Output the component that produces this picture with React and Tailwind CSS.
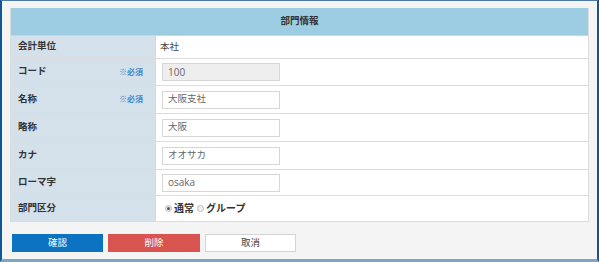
import React from 'react';

const rows = [
  { label: '会計単位', h: 'h-[23px]', kind: 'text', value: '本社' },
  { label: 'コード', h: 'h-[27px]', kind: 'input', value: '100', required: true, disabled: true },
  { label: '名称', h: 'h-[28px]', kind: 'input', value: '大阪支社', required: true },
  { label: '略称', h: 'h-[28px]', kind: 'input', value: '大阪' },
  { label: 'カナ', h: 'h-[28px]', kind: 'input', value: 'オオサカ' },
  { label: 'ローマ字', h: 'h-[26px]', kind: 'input', value: 'osaka' },
  { label: '部門区分', h: 'h-[26px]', kind: 'radio' },
];

const Radio = ({ checked, label }) => (
  <label className="flex items-center gap-[2px]">
    <span className="w-[7px] h-[7px] rounded-full border border-[#bdbdbd] bg-[#eeeeee] flex items-center justify-center">
      {checked && <span className="w-[3px] h-[3px] rounded-full bg-[#555]" />}
    </span>
    <span className="font-bold text-[10px] text-[#333]">{label}</span>
  </label>
);

export default function App() {
  return (
    <div
      className="w-[599px] h-[262px] bg-[#f4f4f4] border-l-2 border-r-2 border-l-[#0e5696] border-r-[#0e5696] border-t border-t-[#4b7aa6] border-b-[3px] border-b-[#7ea5c1] pt-[7px] px-[8px]"
      style={{ fontFamily: '"Open Sans", "Noto Sans CJK JP", sans-serif' }}
    >
      {/* テーブル */}
      <div className="border-x border-[#dcdcdc]">
        <div className="h-[28px] bg-[#9ccde2] border-b border-[#c4d6e0] flex items-center justify-center">
          <span className="font-bold text-[9.5px] text-[#333]">部門情報</span>
        </div>
        {rows.map((r) => (
          <div key={r.label} className={`${r.h} flex border-b border-[#dcdcdc]`}>
            <div className="w-[145px] shrink-0 bg-[#d4e0ea] border-r border-[#d9d9d9] flex items-center justify-between pl-[7px] pr-[12px] pb-[1px]">
              <span className="font-bold text-[9.5px] text-[#333]">{r.label}</span>
              {r.required && <span className="font-bold text-[8px] text-[#3b8ccc]">※必須</span>}
            </div>
            <div className="flex-1 bg-white flex items-center pl-[4px]">
              {r.kind === 'text' && <span className="text-[9.5px] text-[#444]">{r.value}</span>}
              {r.kind === 'input' && (
                <div
                  className={`w-[118px] h-[18px] border border-[#d6d6d6] flex items-center pl-[5px] text-[10px] text-[#666] ml-[2px] ${
                    r.disabled ? 'bg-[#eeeeee]' : 'bg-white'
                  }`}
                >
                  <span className={/^[a-z0-9]+$/.test(r.value) ? '' : 'text-[9.5px]'}>{r.value}</span>
                </div>
              )}
              {r.kind === 'radio' && (
                <div className="flex items-center gap-[3px] pl-[5px]">
                  <Radio checked label="通常" />
                  <Radio label="グループ" />
                </div>
              )}
            </div>
          </div>
        ))}
      </div>

      {/* ボタン */}
      <div className="flex gap-[5px] mt-[12px] pl-[2px]">
        <button className="w-[91px] h-[18px] bg-[#0b73c2] text-white text-[9.5px]">確認</button>
        <button className="w-[92px] h-[18px] bg-[#d9534f] text-white text-[9.5px]">削除</button>
        <button className="w-[91px] h-[18px] bg-white border border-[#d4d4d4] text-[#444] text-[9.5px]">取消</button>
      </div>
    </div>
  );
}
